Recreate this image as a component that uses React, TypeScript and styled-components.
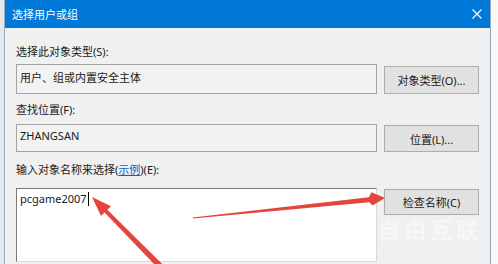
import React from "react";
import styled, { createGlobalStyle } from "styled-components";

const Global = createGlobalStyle`
  html, body {
    margin: 0;
    padding: 0;
    background: #f7f8f9;
  }
  body {
    font-family: "Noto Sans", "Noto Sans CJK SC", sans-serif;
    font-size: 11px;
    color: #1a1a1a;
  }
`;

const Page = styled.div`
  position: relative;
  width: 498px;
  height: 264px;
  overflow: hidden;
  display: flex;
  padding: 0 7px 0 4px;
  box-sizing: border-box;
  background: linear-gradient(90deg, #e4e8ec 0, #e4e8ec 4px, #f8f8f8 4px);
`;

const Dialog = styled.div`
  flex: 1;
  display: flex;
  flex-direction: column;
  border-left: 1px solid #9aacbf;
  border-right: 1px solid #98a9bb;
  background: #f0f0f0;
`;

const TitleBar = styled.div`
  height: 28px;
  flex: none;
  display: flex;
  align-items: center;
  justify-content: space-between;
  padding: 0 8px 0 7px;
  background: #0078d7;
  color: #fff;
  font-size: 11px;
`;

const Close = styled.svg`
  width: 10px;
  height: 10px;
`;

const Body = styled.div`
  display: flex;
  flex-direction: column;
  padding: 16px 11px 0 11px;
`;

const Label = styled.div<{ $top?: number }>`
  height: 16px;
  line-height: 16px;
  margin-top: ${(p) => p.$top ?? 0}px;
`;

const Link = styled.span`
  color: #0066cc;
  text-decoration: underline;
`;

const Row = styled.div<{ $top: number }>`
  display: grid;
  grid-template-columns: 1fr 95px;
  column-gap: 7px;
  align-items: start;
  margin-top: ${(p) => p.$top}px;
`;

const Field = styled.div<{ $h: number; $pad: number }>`
  height: ${(p) => p.$h}px;
  box-sizing: border-box;
  padding: ${(p) => p.$pad}px 4px 0 3px;
  line-height: 16px;
  border: 1px solid #a3a3a3;
  background: #f2f2f2;
`;

const Input = styled(Field)`
  background: #fff;
  border-color: #7a7a7a #d9d9d9 #d9d9d9 #7a7a7a;
`;

const Caret = styled.span`
  display: inline-block;
  width: 1px;
  height: 14px;
  margin-left: 1px;
  vertical-align: -3px;
  background: #000;
`;

const Button = styled.div<{ $top: number; $h: number }>`
  margin-top: ${(p) => p.$top}px;
  height: ${(p) => p.$h}px;
  box-sizing: border-box;
  display: flex;
  align-items: center;
  justify-content: center;
  border: 1px solid #adadad;
  background: #e1e1e1;
`;

const Watermark = styled.div`
  position: absolute;
  left: 378px;
  top: 217px;
  font-size: 22px;
  line-height: 22px;
  font-weight: 700;
  letter-spacing: 4px;
  color: rgba(255, 255, 255, 0.55);
  font-family: "Noto Sans CJK SC", sans-serif;
`;

const Arrows = styled.svg`
  position: absolute;
  left: 0;
  top: 0;
  width: 498px;
  height: 264px;
  pointer-events: none;
`;

export default function App() {
  return (
    <>
      <Global />
      <Page>
        <Dialog>
          <TitleBar>
            <span>选择用户或组</span>
            <Close viewBox="0 0 10 10">
              <path d="M0.5 0.5 L9.5 9.5 M9.5 0.5 L0.5 9.5" stroke="#fff" strokeWidth="1.1" />
            </Close>
          </TitleBar>
          <Body>
            <Label>选择此对象类型(S):</Label>
            <Row $top={4}>
              <Field $h={30} $pad={5}>用户、组或内置安全主体</Field>
              <Button $top={2} $h={28}>对象类型(O)...</Button>
            </Row>
            <Label $top={8}>查找位置(F):</Label>
            <Row $top={6}>
              <Field $h={28} $pad={3}>ZHANGSAN</Field>
              <Button $top={1} $h={27}>位置(L)...</Button>
            </Row>
            <Label $top={10}>
              输入对象名称来选择(<Link>示例</Link>)(E):
            </Label>
            <Row $top={10}>
              <Input $h={74} $pad={2}>
                pcgame2007
                <Caret />
              </Input>
              <Button $top={1} $h={26}>检查名称(C)</Button>
            </Row>
          </Body>
        </Dialog>
        <Watermark>自由互联</Watermark>
        <Arrows viewBox="0 0 498 264">
          <polygon
            points="92,197 111,206.3 107.4,209.8 164.1,265.9 159.9,270.1 104.6,212.6 101,216.1"
            fill="#e5453c"
          />
          <polygon
            points="385,198 372.5,205.5 369.4,202.2 193,218.6 192.8,217.4 368.8,197.2 371.5,192.3"
            fill="#e5453c"
          />
        </Arrows>
      </Page>
    </>
  );
}
